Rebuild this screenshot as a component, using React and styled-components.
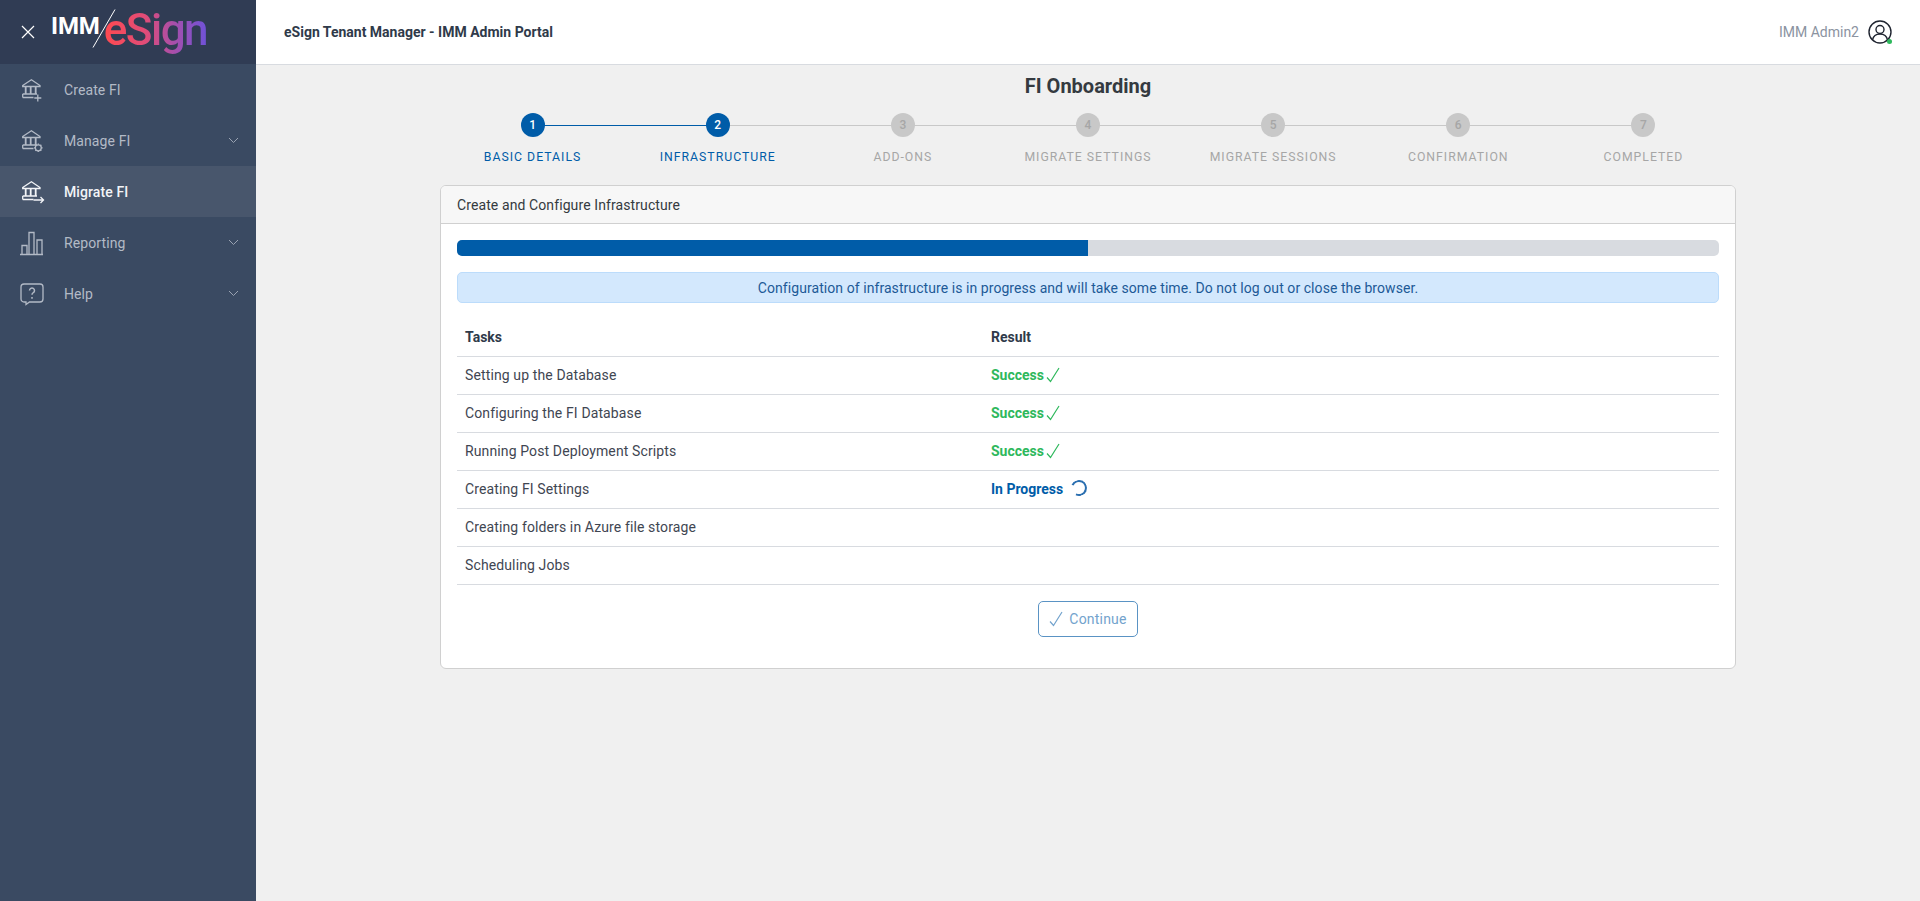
import styled, { createGlobalStyle } from "styled-components";

const Global = createGlobalStyle`
  html, body { margin: 0; padding: 0; height: 100%; }
  body { font-family: Roboto, "Liberation Sans", sans-serif; font-size: 14px; color: #343a40; background: #f0f0f0; }
  * { box-sizing: border-box; }
`;

const Layout = styled.div`
  display: flex;
  height: 901px;
  overflow: hidden;
`;

const Sidebar = styled.aside`
  width: 256px;
  flex-shrink: 0;
  background: #3a4a62;
`;

const Brand = styled.div`
  height: 64px;
  background: #303c54;
  display: flex;
  align-items: center;
  padding-left: 21px;
`;

const CloseBtn = styled.svg`
  width: 14px;
  height: 14px;
`;

const Logo = styled.div`
  position: relative;
  width: 156px;
  height: 64px;
  margin-left: 16px;
  display: flex;
`;

const LogoImm = styled.span`
  font-weight: 700;
  font-size: 24px;
  line-height: 24px;
  color: #fff;
  margin-top: 14px;
  letter-spacing: -0.1px;
`;

const LogoSlash = styled.svg`
  position: absolute;
  left: 41px;
  top: 9px;
  width: 24px;
  height: 39px;
`;

const LogoSign = styled.span`
  font-weight: 500;
  font-size: 44px;
  line-height: 48px;
  margin-left: 4px;
  margin-top: 6px;
  letter-spacing: -1.5px;
  height: 58px;
  background: linear-gradient(90deg, #ff4a50 0%, #e04c78 40%, #a34fae 70%, #6f52d8 100%);
  -webkit-background-clip: text;
  background-clip: text;
  color: transparent;
`;

const NavItem = styled.div`
  height: 51px;
  display: flex;
  align-items: center;
  padding: 0 17px 0 20px;
  background: ${(p) => (p.$active ? "#48566c" : "transparent")};
  color: ${(p) => (p.$active ? "#f2f4f7" : "#b3bac6")};
  font-weight: ${(p) => (p.$active ? 500 : 400)};
`;

const NavIcon = styled.svg`
  width: 26px;
  height: 26px;
  flex-shrink: 0;
  fill: none;
  stroke: currentColor;
  stroke-width: 1.3;
`;

const NavLabel = styled.span`
  flex: 1;
  margin-left: 18px;
  font-size: 14px;
  letter-spacing: 0.1px;
`;

const Chevron = styled.svg`
  width: 11px;
  height: 7px;
  fill: none;
  stroke: #9aa3b2;
  stroke-width: 1;
`;

const Main = styled.main`
  flex: 1;
  min-width: 0;
`;

const TopBar = styled.header`
  height: 65px;
  background: #fff;
  border-bottom: 1px solid #d8dbe0;
  display: flex;
  align-items: center;
  padding: 0 28px;
`;

const TopTitle = styled.div`
  flex: 1;
  font-size: 14px;
  font-weight: 700;
  color: #2f3a4a;
`;

const UserName = styled.span`
  font-size: 14px;
  color: #8b93a1;
  margin-right: 9px;
`;

const Avatar = styled.div`
  position: relative;
  width: 24px;
  height: 24px;
`;

const AvatarDot = styled.span`
  position: absolute;
  right: 0;
  bottom: 0;
  width: 5px;
  height: 5px;
  border-radius: 50%;
  background: #2eb85c;
`;

const Content = styled.div`
  padding: 0 184px;
`;

const PageTitle = styled.h1`
  margin: 0;
  height: 48px;
  padding-top: 9px;
  text-align: center;
  font-size: 20px;
  line-height: 24px;
  font-weight: 700;
  color: #343a40;
`;

const Stepper = styled.div`
  display: grid;
  grid-template-columns: repeat(7, 1fr);
  height: 72px;
`;

const Step = styled.div`
  position: relative;
  display: flex;
  flex-direction: column;
  align-items: center;
  color: ${(p) => (p.$done ? "#005ca8" : "#a6a6a6")};
`;

const StepLine = styled.span`
  position: absolute;
  top: 12px;
  left: 50%;
  width: 100%;
  height: 1px;
  background: ${(p) => (p.$done ? "#005ca8" : "#c8c8c8")};
`;

const StepDot = styled.span`
  position: relative;
  width: 24px;
  height: 24px;
  border-radius: 50%;
  display: flex;
  align-items: center;
  justify-content: center;
  font-size: 12px;
  font-weight: 500;
  background: ${(p) => (p.$done ? "#005ca8" : "#c8c8c8")};
  color: ${(p) => (p.$done ? "#fff" : "#a6a6a6")};
`;

const StepLabel = styled.span`
  margin-top: 12px;
  font-size: 12.25px;
  line-height: 16px;
  letter-spacing: 1px;
  text-transform: uppercase;
`;

const Card = styled.section`
  height: 484px;
  background: #fff;
  border: 1px solid #d0d0d0;
  border-radius: 6px;
  overflow: hidden;
`;

const CardHeader = styled.div`
  height: 38px;
  background: #f7f7f7;
  border-bottom: 1px solid #d0d0d0;
  padding: 0 16px;
  display: flex;
  align-items: center;
  letter-spacing: 0.1px;
`;

const CardBody = styled.div`
  padding: 16px;
`;

const Progress = styled.div`
  height: 16px;
  border-radius: 5px;
  background: #d8dbe0;
  overflow: hidden;
`;

const ProgressBar = styled.div`
  height: 100%;
  background: #005ca8;
`;

const Alert = styled.div`
  margin-top: 16px;
  height: 31px;
  border: 1px solid #bcdcfb;
  border-radius: 5px;
  background: #d3e8fd;
  color: #1d5a97;
  letter-spacing: 0.065px;
  display: flex;
  align-items: center;
  justify-content: center;
`;

const Table = styled.div`
  margin-top: 16px;
`;

const Row = styled.div`
  height: 38px;
  display: grid;
  grid-template-columns: 526px 1fr;
  align-items: center;
  padding: 0 0 2px 8px;
  border-bottom: 1px solid #d8dbe0;
  font-weight: ${(p) => (p.$head ? 700 : 400)};
  letter-spacing: ${(p) => (p.$head ? 0 : "0.12px")};
  color: ${(p) => (p.$head ? "#2f3a4a" : "#3f4652")};
`;

const Result = styled.div`
  display: flex;
  align-items: center;
  font-weight: 700;
  letter-spacing: 0;
  color: ${(p) => (p.$progress ? "#005ca8" : "#2eb85c")};
`;

const Tick = styled.svg`
  width: 14px;
  height: 16px;
  margin-left: ${(p) => (p.$inButton ? 0 : "2px")};
  fill: none;
  stroke: currentColor;
  stroke-width: 1.2;
`;

const Spinner = styled.span`
  width: 16px;
  height: 16px;
  margin: 0 0 1px 8px;
  border: 2px solid #2b6fb0;
  border-left-color: transparent;
  border-radius: 50%;
  transform: rotate(-20deg);
`;

const Actions = styled.div`
  display: flex;
  justify-content: center;
  margin-top: 16px;
`;

const ContinueBtn = styled.button`
  width: 100px;
  height: 36px;
  border: 1px solid #5a93c4;
  border-radius: 5px;
  background: #fff;
  color: #73a3cd;
  font-family: inherit;
  font-size: 14px;
  letter-spacing: 0.2px;
  display: flex;
  align-items: center;
  justify-content: center;
  gap: 6px;
  padding: 0;
`;

const bank = (
  <>
    <path d="M2.7 8.500 11.400 2.800l8.600 5.700v1H2.700z" />
    <path d="M5.700 9.500V17M10.700 9.500V17M15.700 9.500V17" strokeWidth="1.800" />
    <path d="M2.700 17H17M2.700 20.500H13.500M2.700 17v3.500" />
  </>
);

const steps = [
  "Basic Details",
  "Infrastructure",
  "Add-Ons",
  "Migrate Settings",
  "Migrate Sessions",
  "Confirmation",
  "Completed",
];

const nav = [
  {
    label: "Create FI",
    icon: (
      <>
        {bank}
        <path d="M17.800 17.500v7M14.300 21h7" />
      </>
    ),
  },
  {
    label: "Manage FI",
    more: true,
    icon: (
      <>
        {bank}
        <circle cx="18.300" cy="19.800" r="3" />
        <path d="M18.300 15.500v1.300M18.300 22.800v1.300M14 19.800h1.300M21.300 19.800h1.300M15.300 16.800l.9.900M20.400 21.900l.9.900M21.300 16.800l-.9.900M16.200 21.900l-.9.900" />
      </>
    ),
  },
  {
    label: "Migrate FI",
    active: true,
    icon: (
      <>
        {bank}
        <path d="M13.500 21h10M20.500 18l3 3-3 3" />
      </>
    ),
  },
  {
    label: "Reporting",
    more: true,
    icon: <path d="M0 24.500h23M2 24.500V15.500h5v9M9 24.500V2.500h5v22M17 24.500V10h5v14.500" />,
  },
  {
    label: "Help",
    more: true,
    icon: (
      <>
        <path d="M4 3h16a3 3 0 0 1 3 3v12a3 3 0 0 1-3 3H9.500L6 23.500V21H4a3 3 0 0 1-3-3V6a3 3 0 0 1 3-3z" />
        <path d="M9.500 9.500a2.500 2.500 0 1 1 3.800 2.200c-.9.500-1.300 1-1.300 2M12 16v1.800" strokeWidth="1.500" />
      </>
    ),
  },
];

const tasks = [
  { name: "Setting up the Database", status: "ok" },
  { name: "Configuring the FI Database", status: "ok" },
  { name: "Running Post Deployment Scripts", status: "ok" },
  { name: "Creating FI Settings", status: "progress" },
  { name: "Creating folders in Azure file storage" },
  { name: "Scheduling Jobs" },
];

export default function App() {
  return (
    <Layout>
      <Global />
      <Sidebar>
        <Brand>
          <CloseBtn viewBox="0 0 14 14">
            <path d="M1 1 13 13M13 1 1 13" stroke="#fff" strokeWidth="1.200" />
          </CloseBtn>
          <Logo>
            <LogoImm>IMM</LogoImm>
            <LogoSlash viewBox="0 0 24 39">
              <path d="M23 .5 1 38.500" stroke="#fff" strokeWidth="1" />
            </LogoSlash>
            <LogoSign>eSign</LogoSign>
          </Logo>
        </Brand>
        {nav.map((item) => (
          <NavItem key={item.label} $active={item.active}>
            <NavIcon viewBox="0 0 26 26">{item.icon}</NavIcon>
            <NavLabel>{item.label}</NavLabel>
            {item.more && (
              <Chevron viewBox="0 0 11 7">
                <path d="M1 1l4.500 4.500L10 1" />
              </Chevron>
            )}
          </NavItem>
        ))}
      </Sidebar>
      <Main>
        <TopBar>
          <TopTitle>eSign Tenant Manager - IMM Admin Portal</TopTitle>
          <UserName>IMM Admin2</UserName>
          <Avatar>
            <svg viewBox="0 0 24 24" width="24" height="24" fill="none" stroke="#1f2430" strokeWidth="1.400">
              <circle cx="12" cy="12" r="11" />
              <circle cx="12" cy="9.500" r="4" />
              <path d="M4.500 20c.8-4 3.500-6 7.500-6s6.700 2 7.500 6" />
            </svg>
            <AvatarDot />
          </Avatar>
        </TopBar>
        <Content>
          <PageTitle>FI Onboarding</PageTitle>
          <Stepper>
            {steps.map((label, i) => (
              <Step key={label} $done={i < 2}>
                {i < 6 && <StepLine $done={i < 1} />}
                <StepDot $done={i < 2}>{i + 1}</StepDot>
                <StepLabel>{label}</StepLabel>
              </Step>
            ))}
          </Stepper>
          <Card>
            <CardHeader>Create and Configure Infrastructure</CardHeader>
            <CardBody>
              <Progress>
                <ProgressBar style={{ width: "50%" }} />
              </Progress>
              <Alert>
                Configuration of infrastructure is in progress and will take some time. Do not log out or close the browser.
              </Alert>
              <Table>
                <Row $head>
                  <div>Tasks</div>
                  <div>Result</div>
                </Row>
                {tasks.map((t) => (
                  <Row key={t.name}>
                    <div>{t.name}</div>
                    {t.status === "ok" && (
                      <Result>
                        Success
                        <Tick viewBox="0 0 14 16">
                          <path d="M1 10.500 4.500 14.500 13 1" />
                        </Tick>
                      </Result>
                    )}
                    {t.status === "progress" && (
                      <Result $progress>
                        In Progress
                        <Spinner />
                      </Result>
                    )}
                  </Row>
                ))}
              </Table>
              <Actions>
                <ContinueBtn>
                  <Tick $inButton viewBox="0 0 14 16">
                    <path d="M1 10.500 4.500 14.500 13 1" />
                  </Tick>
                  Continue
                </ContinueBtn>
              </Actions>
            </CardBody>
          </Card>
        </Content>
      </Main>
    </Layout>
  );
}
